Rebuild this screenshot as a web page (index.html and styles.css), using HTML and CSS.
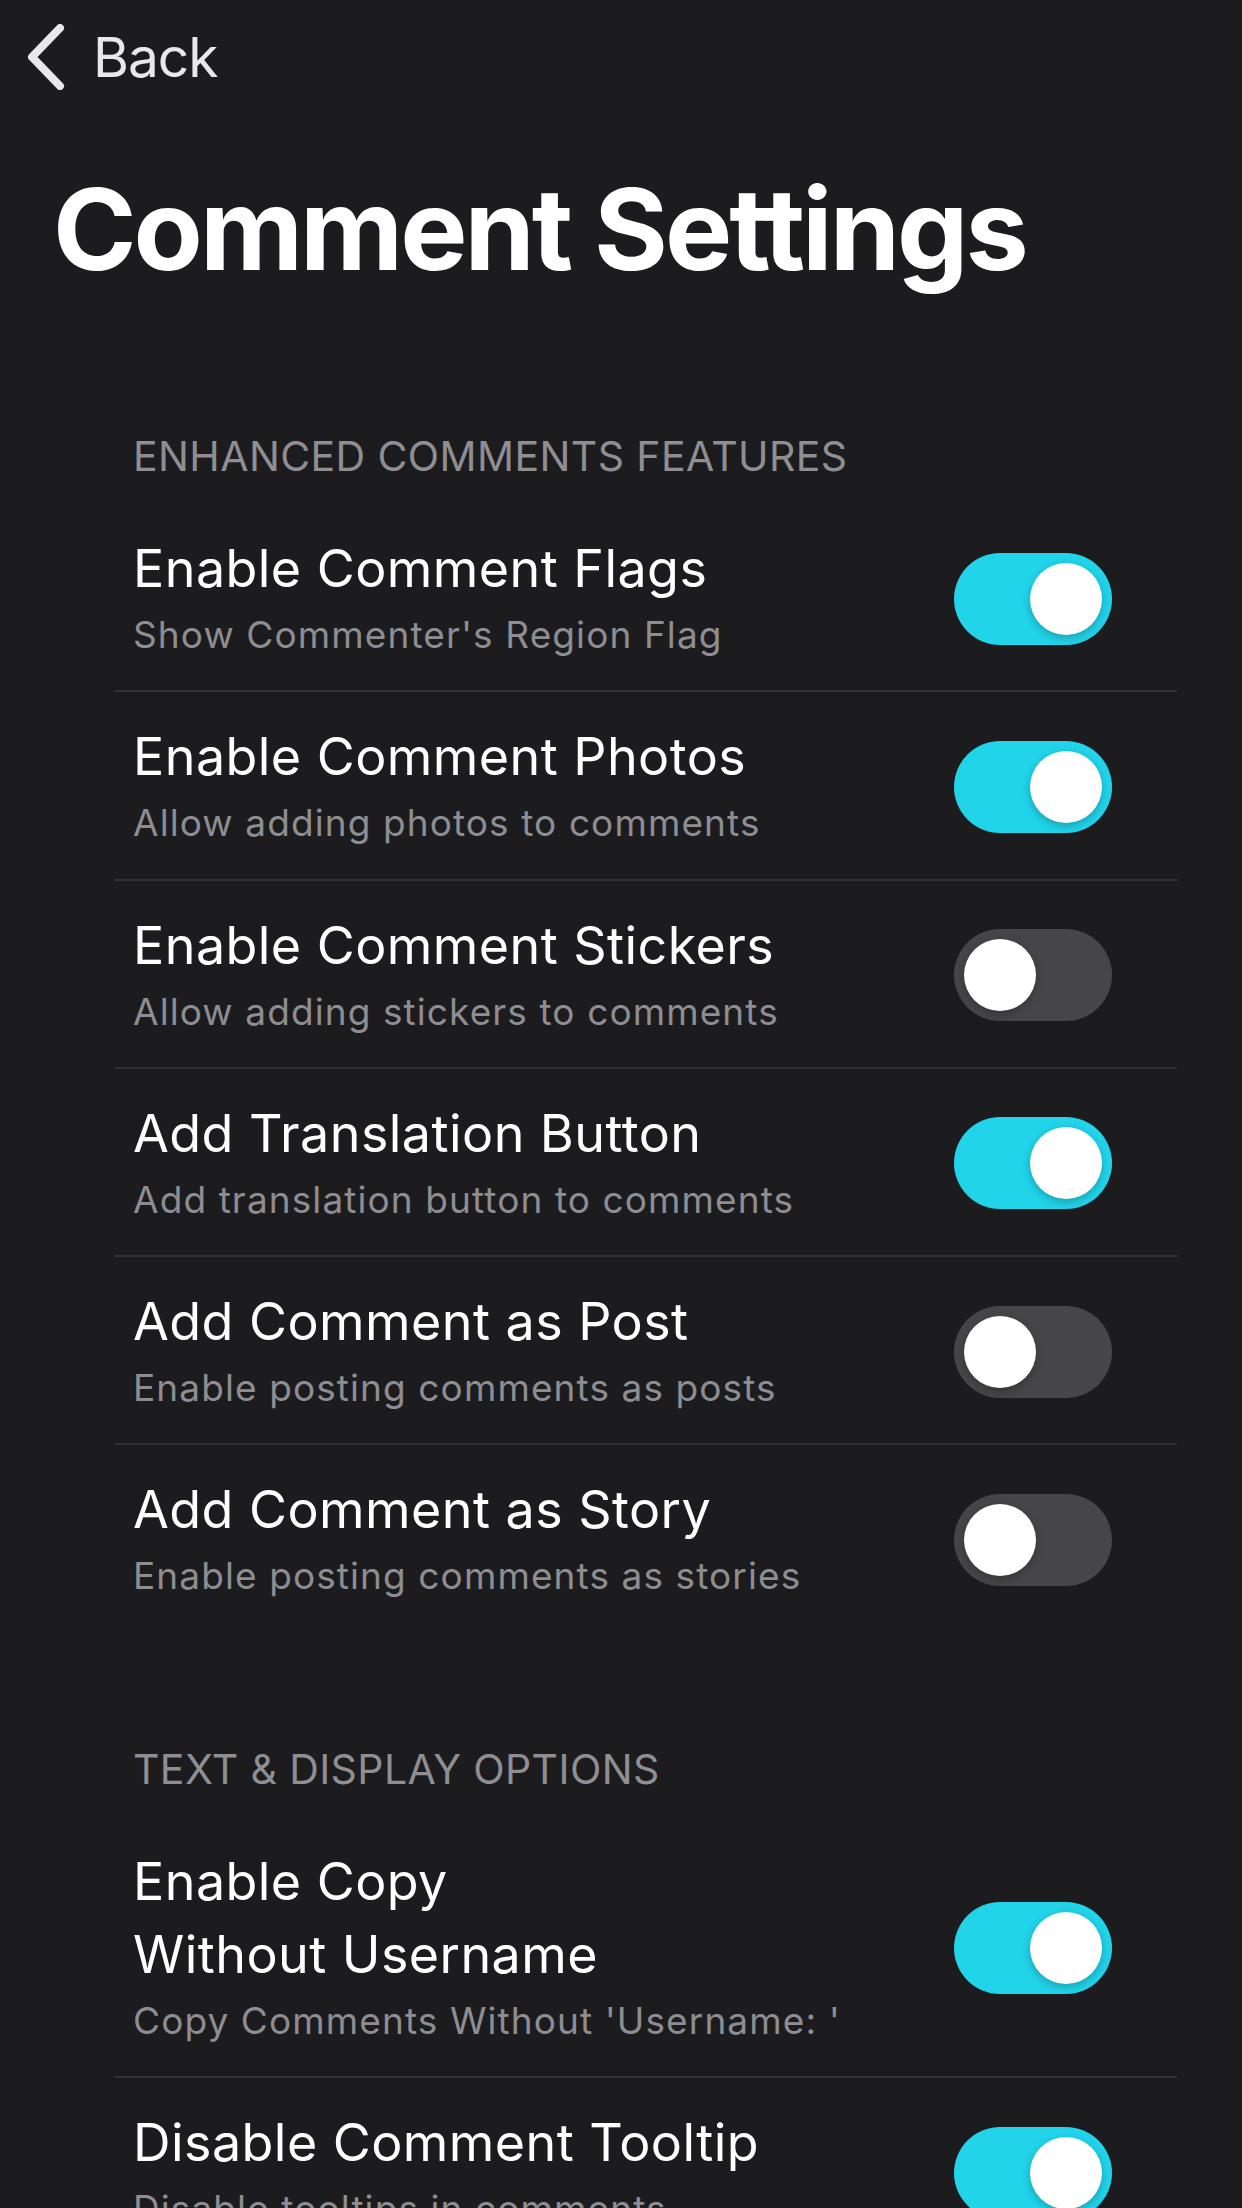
FILE: index.html
```html
<!DOCTYPE html>
<html lang="en">
<head>
<meta charset="utf-8">
<title>Comment Settings</title>
<link rel="stylesheet" href="styles.css">
</head>
<body>
<div class="screen">
  <nav class="nav">
    <a class="back" href="#">
      <svg class="chev" width="44" height="66" viewBox="0 0 44 66"><path d="M34 4 L6 33 L34 62" fill="none" stroke="#e8e8ea" stroke-width="8" stroke-linecap="round" stroke-linejoin="round"/></svg>
      <span class="back-label">Back</span>
    </a>
  </nav>
  <h1 class="title">Comment Settings</h1>

  <section class="group">
    <h2 class="group-header">ENHANCED COMMENTS FEATURES</h2>
    <div class="list">
      <div class="row">
        <div class="row-text"><div class="row-title">Enable Comment Flags</div><div class="row-sub">Show Commenter's Region Flag</div></div>
        <span class="toggle on"><span class="knob"></span></span>
      </div>
      <div class="row">
        <div class="row-text"><div class="row-title">Enable Comment Photos</div><div class="row-sub">Allow adding photos to comments</div></div>
        <span class="toggle on"><span class="knob"></span></span>
      </div>
      <div class="row">
        <div class="row-text"><div class="row-title">Enable Comment Stickers</div><div class="row-sub">Allow adding stickers to comments</div></div>
        <span class="toggle"><span class="knob"></span></span>
      </div>
      <div class="row">
        <div class="row-text"><div class="row-title">Add Translation Button</div><div class="row-sub">Add translation button to comments</div></div>
        <span class="toggle on"><span class="knob"></span></span>
      </div>
      <div class="row">
        <div class="row-text"><div class="row-title">Add Comment as Post</div><div class="row-sub">Enable posting comments as posts</div></div>
        <span class="toggle"><span class="knob"></span></span>
      </div>
      <div class="row">
        <div class="row-text"><div class="row-title">Add Comment as Story</div><div class="row-sub">Enable posting comments as stories</div></div>
        <span class="toggle"><span class="knob"></span></span>
      </div>
    </div>
  </section>

  <section class="group group-2">
    <h2 class="group-header">TEXT &amp; DISPLAY OPTIONS</h2>
    <div class="list">
      <div class="row">
        <div class="row-text"><div class="row-title">Enable Copy<br>Without Username</div><div class="row-sub">Copy Comments Without 'Username: '</div></div>
        <span class="toggle on"><span class="knob"></span></span>
      </div>
      <div class="row">
        <div class="row-text"><div class="row-title">Disable Comment Tooltip</div><div class="row-sub">Disable tooltips in comments</div></div>
        <span class="toggle on"><span class="knob"></span></span>
      </div>
    </div>
  </section>
</div>
</body>
</html>
```

FILE: styles.css
```css
html, body {
  margin: 0;
  padding: 0;
  background: #1c1c1e;
}
body {
  font-family: Inter, "Noto Sans", "Liberation Sans", sans-serif;
  color: #ffffff;
  overflow: hidden;
  height: 2208px;
}
.screen {
  width: 1242px;
}
.nav {
  padding: 25px 0 0 26px;
  height: 64px;
}
.back {
  display: flex;
  align-items: center;
  gap: 23px;
  text-decoration: none;
  color: #e8e8ea;
  height: 64px;
}
.chev {
  display: block;
}
.back-label {
  font-size: 55px;
  line-height: 64px;
  font-weight: 400;
  letter-spacing: -1px;
}
.title {
  margin: 75px 0 0 53px;
  font-size: 113px;
  line-height: 130px;
  font-weight: 700;
  letter-spacing: -3px;
  color: #ffffff;
}
.group {
  margin-top: 137px;
  padding: 0 65px 0 115px;
}
.group-2 {
  margin-top: 112px;
}
.group-header {
  margin: 0 0 23px 18px;
  font-size: 41px;
  line-height: 50px;
  font-weight: 400;
  color: #8e8e93;
  letter-spacing: 0.4px;
}
.list {
  display: flex;
  flex-direction: column;
}
.row {
  display: flex;
  align-items: center;
  justify-content: space-between;
  padding: 28px 65px 25.3px 18px;
  border-bottom: 2px solid #323235;
}
.list .row:last-child {
  border-bottom: none;
}
.row-title {
  font-size: 52px;
  line-height: 73px;
  letter-spacing: 0.45px;
  color: #ffffff;
}
.row-sub {
  font-size: 37px;
  line-height: 60px;
  letter-spacing: 1.1px;
  color: #8d8d92;
}
.toggle {
  position: relative;
  flex: none;
  width: 158px;
  height: 92px;
  border-radius: 46px;
  background: #464649;
}
.toggle.on {
  background: #21d4ea;
}
.knob {
  position: absolute;
  top: 10px;
  left: 10px;
  width: 72px;
  height: 72px;
  border-radius: 50%;
  background: #ffffff;
  box-shadow: 0 3px 8px rgba(0,0,0,0.25);
}
.toggle.on .knob {
  left: 76px;
}
```
